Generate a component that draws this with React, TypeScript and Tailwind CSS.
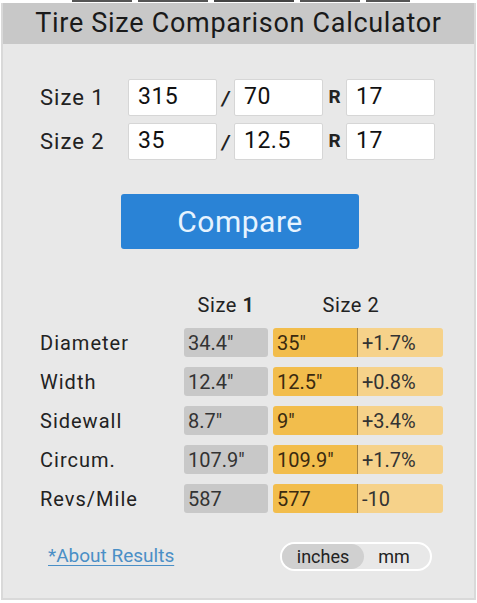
import React from "react";

const rows = [
  { label: "Diameter", a: '34.4"', b: '35"', c: "+1.7%" },
  { label: "Width", a: '12.4"', b: '12.5"', c: "+0.8%" },
  { label: "Sidewall", a: '8.7"', b: '9"', c: "+3.4%" },
  { label: "Circum.", a: '107.9"', b: '109.9"', c: "+1.7%" },
  { label: "Revs/Mile", a: "587", b: "577", c: "-10" },
];

function SizeRow({ label, a, b, c }: { label: string; a: string; b: string; c: string }) {
  const box =
    "w-[89px] h-[37px] bg-white border border-[#d6d6d6] rounded-[2px] flex items-center pl-[9px] text-[23px] tracking-[0.5px] text-[#111]";
  return (
    <div className="flex items-center h-[37px]">
      <div className="w-[88px] text-[22px] tracking-[1px] text-[#222]">{label}</div>
      <div className={box}>{a}</div>
      <div className="w-[17px] text-center text-[20px] font-bold text-[#222] italic">/</div>
      <div className={box}>{b}</div>
      <div className="w-[23px] text-center text-[19px] font-bold text-[#222]">R</div>
      <div className={box}>{c}</div>
    </div>
  );
}

export default function App() {
  return (
    <div className="w-[477px] h-[603px] bg-white overflow-hidden" style={{ fontFamily: "Roboto, 'Noto Sans', sans-serif" }}>
      <div className="h-[3px] relative">
        <div className="absolute left-[72px] top-0 w-[60px] h-[2px] bg-[#555]" />
        <div className="absolute left-[138px] top-0 w-[70px] h-[2px] bg-[#555]" />
        <div className="absolute left-[214px] top-0 w-[80px] h-[2px] bg-[#444]" />
        <div className="absolute left-[300px] top-0 w-[60px] h-[2px] bg-[#555]" />
        <div className="absolute left-[366px] top-0 w-[44px] h-[2px] bg-[#555]" />
      </div>
      <div className="mx-[1px] h-[597px] bg-[#e8e8e8] border-x-2 border-b-2 border-[#d9d9d9]">
        <div className="h-[41px] bg-[#c8c8c8] flex items-center justify-center text-[27px] tracking-[0.7px] text-[#1a1a1a]">
          Tire Size Comparison Calculator
        </div>
        <div className="pl-[37px] pt-[35px] flex flex-col gap-[7px]">
          <SizeRow label="Size 1" a="315" b="70" c="17" />
          <SizeRow label="Size 2" a="35" b="12.5" c="17" />
        </div>
        <div className="pl-[118px] mt-[34px]">
          <div className="w-[238px] h-[55px] bg-[#2a83d6] rounded-[3px] flex items-center justify-center text-[30px] tracking-[0.5px] text-[#e6f3ff]">
            Compare
          </div>
        </div>
        <div className="pl-[37px] mt-[43px]">
          <div className="flex h-[26px] items-center text-[20px] tracking-[0.6px] text-[#222]">
            <div className="w-[144px]" />
            <div className="w-[84px] text-center">Size <span className="font-semibold">1</span></div>
            <div className="w-[170px] text-center pr-[4px]">Size 2</div>
          </div>
          <div className="flex flex-col gap-[10px] mt-[10px]">
            {rows.map((r) => (
              <div key={r.label} className="flex h-[29px] items-center text-[20px]">
                <div className="w-[144px] text-[#222] tracking-[1px]">{r.label}</div>
                <div className="w-[84px] h-[29px] bg-[#c8c8c8] rounded-[3px] flex items-center pl-[4px] text-[#333]">{r.a}</div>
                <div className="ml-[5px] flex h-[29px] rounded-[3px] overflow-hidden">
                  <div className="w-[85px] bg-[#f2bd4c] flex items-center pl-[4px] text-[#3a2a10] border-r border-[#a88440]">{r.b}</div>
                  <div className="w-[85px] bg-[#f6d28a] flex items-center pl-[4px] text-[#333]">{r.c}</div>
                </div>
              </div>
            ))}
          </div>
        </div>
        <div className="flex items-center mt-[29px] h-[29px]">
          <div className="ml-[45px] text-[19px] text-[#4a8fc6] underline underline-offset-[3px]">*About Results</div>
          <div className="ml-auto mr-[42px] w-[152px] h-[29px] rounded-full border-2 border-white flex items-center text-[18px] text-[#222]">
            <div className="w-[82px] h-full rounded-full bg-[#d0d0d0] flex items-center justify-center">inches</div>
            <div className="flex-1 text-center pr-[6px]">mm</div>
          </div>
        </div>
      </div>
    </div>
  );
}
